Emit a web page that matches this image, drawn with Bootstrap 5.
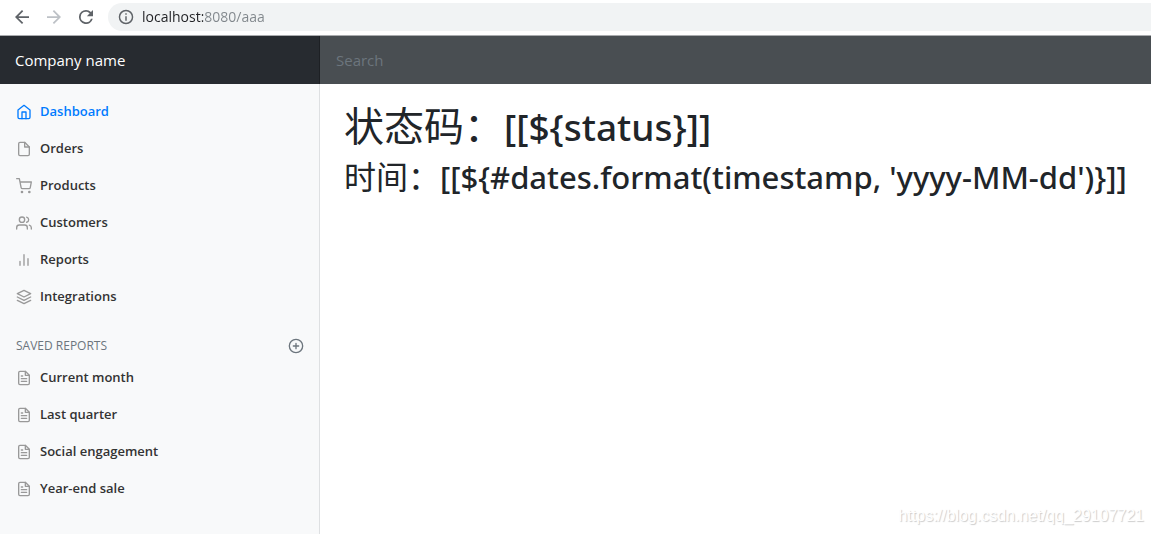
<!DOCTYPE html>
<html lang="zh-CN">
<head>
<meta charset="utf-8">
<meta name="viewport" content="width=device-width, initial-scale=1">
<title>Dashboard</title>
<link href="https://cdn.jsdelivr.net/npm/bootstrap@5.3.0/dist/css/bootstrap.min.css" rel="stylesheet">
<style>
  body { font-family: "Open Sans", "Noto Sans CJK SC", sans-serif; color: #212529; }
  .ico { width: 16px; height: 16px; flex: none; fill: none; stroke: currentColor; stroke-width: 2; stroke-linecap: round; stroke-linejoin: round; }

  /* Browser bar */
  .browser-bar { height: 36px; border-bottom: 1px solid #a9abae; padding: 0 0 2px 14px; gap: 16px; color: #5f6368; }
  .browser-bar button { line-height: 0; color: inherit; }
  .browser-bar button:disabled { color: #bdc1c6; border: 0; opacity: 1; }
  .browser-bar svg { width: 16px; height: 16px; fill: currentColor; }
  .browser-bar .arrow { width: 14px; height: 14px; margin: 1px; }
  .address { height: 28px; background: #f1f3f4; border-radius: 14px 0 0 14px; padding-left: 10px; gap: 8px; margin-left: -2px; }
  .address input {
    outline: 0; font-size: 14px; line-height: 20px; color: transparent;
    background: linear-gradient(90deg, #202124 61px, #80868b 61px) text;
    -webkit-background-clip: text; background-clip: text;
  }

  /* Application header */
  .top-bar { background: #343a40; }
  .side-col { flex: 0 0 320px; }
  .brand { background: #272b30; box-shadow: inset -1px 0 0 #1d2024; font-size: 15px; line-height: 24px; padding: 12px 15px; color: #fff; }
  .top-search { background: #494e52; font-size: 15px; line-height: 24px; padding: 12px 16px; color: #fff; outline: 0; }
  .top-search::placeholder { color: #6c757d; opacity: 1; }

  /* Sidebar */
  .side-menu { background: #f8f9fa; box-shadow: inset -1px 0 0 #dee0e2; padding-top: 9px; }
  .side-menu .nav-link { display: flex; align-items: center; gap: 8px; padding: 8px 16px; font-size: 13px; line-height: 21px; font-weight: 600; color: #333; }
  .side-menu .nav-link .ico { color: #999; }
  .side-menu .nav-link.active, .side-menu .nav-link.active .ico { color: #007bff; }
  .side-heading { font-size: 12px; line-height: 18px; color: #6c757d; padding: 0 16px; margin: 22px 0 4px; }

  /* Content */
  .page-main { padding: 19px 24px; }
  .page-main h1, .page-main h2 { font-family: "Noto Sans", sans-serif; font-weight: 500; }
  .page-main h1 { font-size: 37px; line-height: 48px; margin-bottom: 7px; }
  .page-main h2 { font-size: 31px; line-height: 38px; }
  .page-main .han { font-family: "Noto Sans CJK SC", sans-serif; font-weight: 400; line-height: 1; }
  h1 .han { font-size: 40px; }
  h2 .han { font-size: 32px; }
  .watermark { right: 7px; bottom: 8px; font: 16px/20px "Liberation Sans", sans-serif; color: #fff; text-shadow: 1px 1px 1px #ccc; }
</style>
</head>
<body class="d-flex flex-column min-vh-100">
<svg class="d-none" xmlns="http://www.w3.org/2000/svg">
  <symbol id="i-home" viewBox="0 0 24 24"><path d="M3 9l9-7 9 7v11a2 2 0 0 1-2 2H5a2 2 0 0 1-2-2z"/><path d="M9 22V12h6v10"/></symbol>
  <symbol id="i-file" viewBox="0 0 24 24"><path d="M13 2H6a2 2 0 0 0-2 2v16a2 2 0 0 0 2 2h12a2 2 0 0 0 2-2V9z"/><path d="M13 2v7h7"/></symbol>
  <symbol id="i-cart" viewBox="0 0 24 24"><circle cx="9" cy="21" r="1"/><circle cx="20" cy="21" r="1"/><path d="M1 1h4l2.68 13.39a2 2 0 0 0 2 1.61h9.72a2 2 0 0 0 2-1.61L23 6H6"/></symbol>
  <symbol id="i-users" viewBox="0 0 24 24"><path d="M17 21v-2a4 4 0 0 0-4-4H5a4 4 0 0 0-4 4v2"/><circle cx="9" cy="7" r="4"/><path d="M23 21v-2a4 4 0 0 0-3-3.87M16 3.13a4 4 0 0 1 0 7.75"/></symbol>
  <symbol id="i-bars" viewBox="0 0 24 24"><path d="M18 20V10M12 20V4M6 20v-6"/></symbol>
  <symbol id="i-layers" viewBox="0 0 24 24"><path d="M12 2L2 7l10 5 10-5-10-5zM2 17l10 5 10-5M2 12l10 5 10-5"/></symbol>
  <symbol id="i-text" viewBox="0 0 24 24"><path d="M14 2H6a2 2 0 0 0-2 2v16a2 2 0 0 0 2 2h12a2 2 0 0 0 2-2V8z"/><path d="M14 2v6h6M16 13H8M16 17H8M10 9H8"/></symbol>
  <symbol id="i-plus" viewBox="0 0 24 24"><circle cx="12" cy="12" r="10"/><path d="M12 8v8M8 12h8"/></symbol>
</svg>

<div class="browser-bar d-flex align-items-center">
  <button type="button" class="border-0 bg-transparent p-0" aria-label="Back"><svg class="arrow" viewBox="4 4 16 16"><path d="M20 11H7.83l5.59-5.59L12 4l-8 8 8 8 1.41-1.41L7.83 13H20v-2z"/></svg></button>
  <button type="button" class="border-0 bg-transparent p-0" aria-label="Forward" disabled><svg class="arrow" viewBox="4 4 16 16"><path d="M12 4l-1.41 1.41L16.17 11H4v2h12.17l-5.58 5.59L12 20l8-8z"/></svg></button>
  <button type="button" class="border-0 bg-transparent p-0" aria-label="Reload"><svg class="arrow" viewBox="4 4 16 16"><path d="M17.65 6.35A7.96 7.96 0 0 0 12 4a8 8 0 1 0 7.73 10h-2.08A6 6 0 1 1 12 6c1.66 0 3.14.69 4.22 1.78L13 11h7V4z"/></svg></button>
  <div class="address d-flex align-items-center flex-grow-1">
    <svg viewBox="1 1 22 22" aria-hidden="true"><path d="M11 17h2v-6h-2zm1-15a10 10 0 1 0 0 20 10 10 0 0 0 0-20zm0 18a8 8 0 1 1 0-16 8 8 0 0 1 0 16zM11 9h2V7h-2z"/></svg>
    <input type="text" class="border-0 p-0 flex-grow-1" aria-label="Address" value="localhost:8080/aaa">
  </div>
</div>

<header class="top-bar d-flex">
  <a class="brand side-col text-decoration-none" href="#">Company name</a>
  <input type="search" class="top-search border-0 flex-grow-1" placeholder="Search" aria-label="Search">
</header>

<div class="d-flex flex-grow-1 position-relative">
  <nav class="side-menu side-col" aria-label="Main">
    <ul class="nav flex-column">
      <li><a class="nav-link active" aria-current="page" href="#"><svg class="ico"><use href="#i-home"/></svg>Dashboard</a></li>
      <li><a class="nav-link" href="#"><svg class="ico"><use href="#i-file"/></svg>Orders</a></li>
      <li><a class="nav-link" href="#"><svg class="ico"><use href="#i-cart"/></svg>Products</a></li>
      <li><a class="nav-link" href="#"><svg class="ico"><use href="#i-users"/></svg>Customers</a></li>
      <li><a class="nav-link" href="#"><svg class="ico"><use href="#i-bars"/></svg>Reports</a></li>
      <li><a class="nav-link" href="#"><svg class="ico"><use href="#i-layers"/></svg>Integrations</a></li>
    </ul>
    <h6 class="side-heading d-flex justify-content-between align-items-center fw-normal text-uppercase">
      <span>Saved reports</span>
      <a class="d-flex link-secondary" href="#" aria-label="Add a report"><svg class="ico"><use href="#i-plus"/></svg></a>
    </h6>
    <ul class="nav flex-column">
      <li><a class="nav-link" href="#"><svg class="ico"><use href="#i-text"/></svg>Current month</a></li>
      <li><a class="nav-link" href="#"><svg class="ico"><use href="#i-text"/></svg>Last quarter</a></li>
      <li><a class="nav-link" href="#"><svg class="ico"><use href="#i-text"/></svg>Social engagement</a></li>
      <li><a class="nav-link" href="#"><svg class="ico"><use href="#i-text"/></svg>Year-end sale</a></li>
    </ul>
  </nav>
  <main class="page-main pe-0 flex-grow-1">
    <h1><span class="han">状态码：</span>[[${status}]]</h1>
    <h2><span class="han">时间：</span>[[${#dates.format(timestamp, 'yyyy-MM-dd')}]]</h2>
  </main>
  <div class="watermark position-absolute">https://blog.csdn.net/qq_29107721</div>
</div>
<script src="https://cdn.jsdelivr.net/npm/bootstrap@5.3.0/dist/js/bootstrap.bundle.min.js"></script>
</body>
</html>
